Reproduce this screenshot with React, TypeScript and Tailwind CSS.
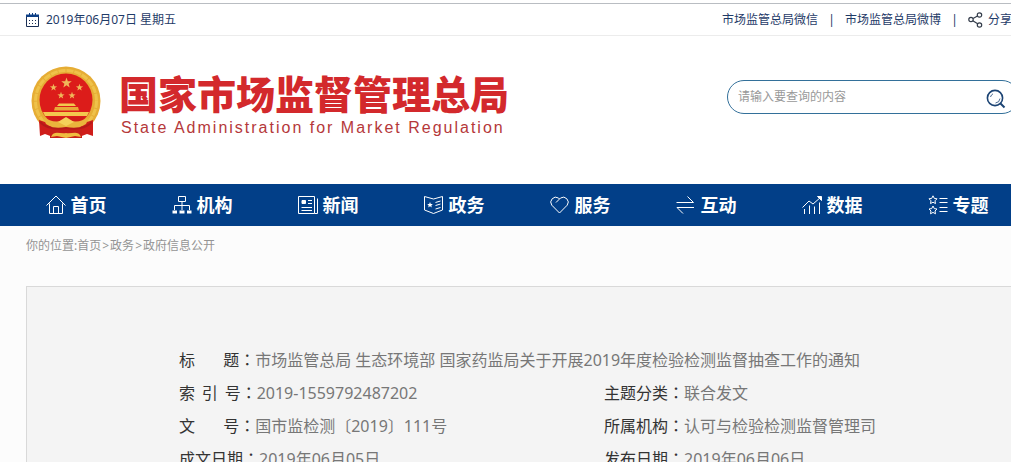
import type { ReactNode } from "react";

interface NavItem {
  label: string;
  icon: ReactNode;
}

const navItems: NavItem[] = [
  {
    label: "首页",
    icon: (
      <>
        <path d="M0.5 10.5 L10 1 L19.5 10.5" />
        <path d="M3.5 8.5 V18.5 H16.5 V8.5" />
        <path d="M7.5 18.5 V11.5 H12.5 V18.5" />
      </>
    ),
  },
  {
    label: "机构",
    icon: (
      <>
        <path d="M6.5 1.5 H13.5 V6.5 H6.5 Z M10 6.5 V15 M2.5 15 V10.5 H17.5 V15" />
        <path d="M0.5 17 H5 M7.5 17 H12.5 M15 17 H19.5" strokeWidth="3" />
      </>
    ),
  },
  {
    label: "新闻",
    icon: (
      <>
        <path d="M0.5 1.5 H16.5 V18.5 H0.5 Z M19.5 3.5 V18.5 H16.5" />
        <path d="M10 5.5 H14 M10 8.5 H14 M3.5 12.5 H14 M3.5 15.5 H14" />
        <path d="M4 5.5 H7.5 V8.5 H4 Z" fill="currentColor" />
      </>
    ),
  },
  {
    label: "政务",
    icon: (
      <>
        <path d="M0.5 1.5 L9.5 4 L18.5 1.5 V15 L9.5 18.5 L0.5 15 Z" />
        <path d="M11.5 7.5 L16.5 6 M11.5 10.5 L16.5 9 M11.5 14 L16.5 12.5" />
        <path
          d="M6 7 L6.8 9 L8.8 9.1 L7.3 10.4 L7.8 12.5 L6 11.3 L4.2 12.5 L4.7 10.4 L3.2 9.1 L5.2 9 Z"
          fill="currentColor"
          stroke="none"
        />
      </>
    ),
  },
  {
    label: "服务",
    icon: (
      <>
        <path d="M9.5 18 L1.8 10.2 A5 5 0 0 1 8.5 3 L9.5 4 L10.5 3 A5 5 0 0 1 17.2 10.2 Z" />
        <path d="M9.5 4 L6 7.5" />
      </>
    ),
  },
  {
    label: "互动",
    icon: (
      <>
        <path d="M0.5 7.5 H17.5 L11.5 1.5" />
        <path d="M18 12.5 H1 L7 18.5" />
      </>
    ),
  },
  {
    label: "数据",
    icon: (
      <>
        <path d="M0.5 12.5 L7 6 L11 9 L19 2" />
        <path d="M15.5 1.5 H19.5 V5.5 Z" fill="currentColor" />
        <path d="M2.5 14 V19 M7.5 10.5 V19 M12.5 11.5 V19 M17.5 7.5 V19" />
      </>
    ),
  },
  {
    label: "专题",
    icon: (
      <>
        <path d="M5 0.8 L6.3 3.4 L9 3.8 L7 5.8 L7.5 8.6 L5 7.2 L2.5 8.6 L3 5.8 L1 3.8 L3.7 3.4 Z" />
        <path d="M5 11 L6.3 13.6 L9 14 L7 16 L7.5 18.8 L5 17.4 L2.5 18.8 L3 16 L1 14 L3.7 13.6 Z" />
        <path d="M11.5 3.5 H19.5 M11.5 7.5 H19.5 M11.5 12.5 H19.5 M11.5 16.5 H19.5" />
      </>
    ),
  },
];

interface Field {
  label: string;
  value: string;
  wide?: boolean;
}

const fields: Field[] = [
  {
    label: "标\u2003\u2002\u00a0题",
    value: "市场监管总局 生态环境部 国家药监局关于开展2019年度检验检测监督抽查工作的通知",
    wide: true,
  },
  { label: "索\u00a0\u2009引\u00a0\u2009号", value: "2019-1559792487202" },
  { label: "主题分类", value: "联合发文" },
  { label: "文\u2003\u2002\u00a0号", value: "国市监检测〔2019〕111号" },
  { label: "所属机构", value: "认可与检验检测监督管理司" },
  { label: "成文日期", value: "2019年06月05日" },
  { label: "发布日期", value: "2019年06月06日" },
];

function CalendarIcon() {
  return (
    <svg viewBox="0 0 13 14" className="h-[14px] w-[13px]" fill="none" aria-hidden="true">
      <path d="M0.5 2 V13.5 H12.5 V2" stroke="#1b2f55" />
      <path d="M0 1.5 H13 V4 H0 Z" fill="#0d3f86" />
      <path d="M3.5 0 V2 M6.5 0 V2 M9.5 0 V2" stroke="#0d3f86" />
      <path d="M3 7.5 H11 M3 10.5 H11" stroke="#1b2f55" strokeDasharray="1 2" />
    </svg>
  );
}

function ShareIcon() {
  return (
    <svg
      viewBox="0 0 15 16"
      className="h-4 w-[15px]"
      fill="none"
      stroke="#333c4a"
      strokeWidth="1.2"
      aria-hidden="true"
    >
      <circle cx="3" cy="7.5" r="2.2" />
      <circle cx="11.5" cy="3" r="2.2" />
      <circle cx="11.5" cy="13" r="2.2" />
      <path d="M5 6.5 L9.5 4 M4.8 8.8 L9.7 11.8" />
    </svg>
  );
}

function SearchIcon() {
  return (
    <svg viewBox="0 0 20 20" className="size-5" fill="none" stroke="#1c4474" aria-hidden="true">
      <circle cx="9" cy="9" r="7.6" strokeWidth="1.6" />
      <path d="M14.5 14.5 L18.5 18.5" strokeWidth="2" />
      <path d="M14 9.5 A5 5 0 0 1 9.5 14 M4.5 8 A5 5 0 0 1 7 4.8" strokeWidth="0.8" />
    </svg>
  );
}

function Emblem() {
  const star =
    "M0 -5 L1.2 -1.6 L4.8 -1.5 L1.9 0.6 L2.9 4 L0 2 L-2.9 4 L-1.9 0.6 L-4.8 -1.5 L-1.2 -1.6 Z";

  return (
    <svg viewBox="0 0 70 74" className="h-[74px] w-[70px] shrink-0" aria-hidden="true">
      <circle cx="35" cy="35" r="34.5" fill="#e6ad35" />
      <circle cx="35" cy="35" r="30.5" fill="none" stroke="#efc24a" strokeWidth="3" strokeDasharray="7 1" />
      <circle cx="35" cy="34" r="26.5" fill="#dc1c1a" />
      <g fill="#f0b85a">
        <path d={star} transform="translate(35.5 17) scale(1.1)" />
        <path d={star} transform="translate(22.5 21.5) scale(0.75)" />
        <path d={star} transform="translate(48.5 21.5) scale(0.75)" />
        <path d={star} transform="translate(30 29.5) scale(0.75)" />
        <path d={star} transform="translate(41 29.5) scale(0.75)" />
      </g>
      <path d="M26 40 L28 37.5 H43 L45 40 Z" fill="#f3c84e" />
      <path d="M24 41 H47 L48 44.5 H23 Z" fill="#e9a938" />
      <path d="M12 46 H58 L56 50 H14 Z" fill="#f3c84e" />
      {/* red drapery on both sides */}
      <path d="M8 54 L20 58 L22 71 L14 68 L9 70 Z" fill="#cf1d1a" />
      <path d="M62 54 L50 58 L48 71 L56 68 L62 70 Z" fill="#cf1d1a" />
      <path d="M16 51 H54 L44 60 H26 Z" fill="#d01d1a" />
      <path d="M19 63 H51 V72 H19 Z" fill="#c81f1a" />
      {/* sheaves tied over the gear */}
      <path d="M12 51 C20 56 27 57 35 53 C43 57 50 56 58 51 L55 58 C47 63 40 63 35 61 C30 63 23 63 15 58 Z" fill="#eab43c" />
      <path d="M27 56 L35 51 L43 56 L35 60 Z" fill="#f4d05a" />
      <path
        d="M9 56 C15 62 23 64 35 62 C47 64 55 62 61 56"
        fill="none"
        stroke="#b51a18"
        strokeWidth="2"
      />
      <path d="M20 71 C23 64 28 68 35 67 C42 68 47 64 50 71 L44 70 L35 72 L26 70 Z" fill="#efbd40" />
    </svg>
  );
}

function TopBar() {
  return (
    <div className="mt-[3px] shrink-0 border-t border-[#b9bdc2]">
      <div className="-mr-1 flex h-8 items-center justify-between overflow-hidden border-b border-[#ececec] pl-[26px] text-xs text-[#1f3b68]">
        <div className="flex items-center gap-[7px]">
          <CalendarIcon />
          <time dateTime="2019-06-07">2019年06月07日 星期五</time>
        </div>
        <div className="flex items-center whitespace-nowrap pr-[3px]">
          <a href="#weixin">市场监管总局微信</a>
          <span className="w-[27px] text-center">|</span>
          <a href="#weibo">市场监管总局微博</a>
          <span className="w-[27px] text-center">|</span>
          <a href="#share" className="flex items-center gap-[5px]">
            <ShareIcon />
            分享
          </a>
        </div>
      </div>
    </div>
  );
}

function Header() {
  return (
    <header className="flex h-[148px] shrink-0 items-start justify-between pl-[31px]">
      <a href="#home" className="mt-[30px] flex">
        <Emblem />
        <div className="ml-[18px] whitespace-nowrap">
          <h1 className="mt-[5px] text-[39px] leading-[46px] font-black text-[#d3292c]">
            国家市场监督管理总局
          </h1>
          <p className="pl-[2px] font-['Liberation_Sans',sans-serif] text-base leading-[22px] tracking-[2px] text-[#b5383a]">
            State Administration for Market Regulation
          </p>
        </div>
      </a>
      <form className="mt-11 -mr-2 flex h-[34px] w-[292px] items-center rounded-full border border-[#33709a] pr-3 pl-[10px]">
        <input
          type="text"
          aria-label="搜索"
          placeholder="请输入要查询的内容"
          className="min-w-0 flex-1 text-xs text-[#555] outline-none placeholder:text-[#999]"
        />
        <button type="button" aria-label="查询" className="mt-1">
          <SearchIcon />
        </button>
      </form>
    </header>
  );
}

function MainNav() {
  return (
    <nav className="shrink-0 bg-[#023f88]">
      <ul className="-mr-[10px] ml-[13px] grid h-[42px] grid-cols-8 items-center">
        {navItems.map((item) => (
          <li key={item.label}>
            <a
              href={`#${item.label}`}
              className="flex items-center justify-center gap-[5px] text-lg font-bold text-white"
            >
              <svg
                viewBox="0 0 20 20"
                className="size-5"
                fill="none"
                stroke="currentColor"
                aria-hidden="true"
              >
                {item.icon}
              </svg>
              {item.label}
            </a>
          </li>
        ))}
      </ul>
    </nav>
  );
}

function Breadcrumb() {
  return (
    <div className="flex h-10 items-center text-xs text-[#949494]">
      你的位置:
      <a href="#home">首页</a>
      <span className="px-px">&gt;</span>
      <a href="#affairs">政务</a>
      <span className="px-px">&gt;</span>
      <a href="#open">政府信息公开</a>
    </div>
  );
}

function DocumentInfo() {
  return (
    <section className="mt-5 -mr-2 border border-[#d9d9d9] bg-[#f4f4f4] pt-[57px] pb-10 pl-[152px]">
      <dl className="grid grid-cols-[425px_1fr] text-base leading-[33px] whitespace-nowrap">
        {fields.map((field) => (
          <div key={field.label} className={field.wide ? "col-span-2 flex h-[33px]" : "flex h-[33px]"}>
            <dt className="text-[#333]">
              {field.label}
              <span lang="zh-TW" className="font-['Noto_Sans_CJK_TC',sans-serif] leading-none">
                ：
              </span>
            </dt>
            <dd className="text-[#777]">{field.value}</dd>
          </div>
        ))}
      </dl>
    </section>
  );
}

export default function App() {
  return (
    <div
      lang="zh-CN"
      className="flex h-screen flex-col overflow-hidden bg-white font-['Noto_Sans','Noto_Sans_CJK_SC',sans-serif]"
    >
      <TopBar />
      <Header />
      <MainNav />
      <main className="grow bg-[#fcfcfc] pl-[26px]">
        <Breadcrumb />
        <DocumentInfo />
      </main>
    </div>
  );
}
